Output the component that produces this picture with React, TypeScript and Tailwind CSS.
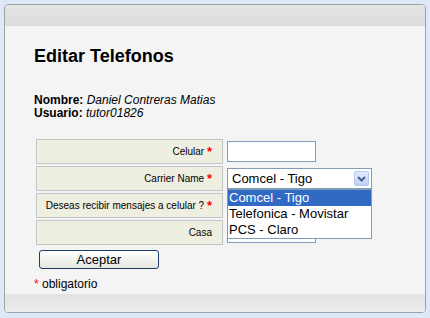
const carriers = ["Comcel - Tigo", "Telefonica - Movistar", "PCS - Claro"];

function Star() {
  return <span className="text-[13px] font-bold text-[#ff0000]">*</span>;
}

function LabelCell({ children }: { children: React.ReactNode }) {
  return (
    <div className="flex h-[25px] w-[187px] items-center justify-end whitespace-nowrap border border-[#bfc6c6] bg-[#eeefe0] pr-[10px] text-[10px] text-black">
      {children}
    </div>
  );
}

export default function App() {
  return (
    <div className="h-[318px] w-[430px] bg-[#dfe8f6] p-[4px] font-['Liberation_Sans',Arial,sans-serif]">
      <div className="flex h-[309px] w-[422px] flex-col overflow-hidden rounded-[4px] border border-[#9aa3ab] bg-[#f4f4f4]">
        <div className="h-[21px] bg-gradient-to-b from-[#e4e4e4] to-[#dcdcdc]" />
        <div className="relative flex-1 pl-[29px]">
          <h1 className="mt-[20px] text-[18px] font-bold leading-[20px] text-black">Editar Telefonos</h1>
          <div className="mt-[28px] text-[12px] leading-[13px] text-black">
            <p>
              <b>Nombre:</b> <i>Daniel Contreras Matias</i>
            </p>
            <p>
              <b>Usuario:</b> <i>tutor01826</i>
            </p>
          </div>

          <div className="mt-[19px] ml-[2px] flex flex-col gap-[2px]">
            <div className="flex items-center gap-[4px]">
              <LabelCell>
                Celular&nbsp;<Star />
              </LabelCell>
              <div className="h-[21px] w-[89px] border border-[#7f9db9] bg-white" />
            </div>
            <div className="flex items-center gap-[4px]">
              <LabelCell>
                Carrier Name&nbsp;<Star />
              </LabelCell>
              <div className="relative flex h-[21px] w-[145px] items-center border border-[#7f9db9] bg-white pl-[4px] text-[13px] text-black">
                Comcel - Tigo
                <div className="absolute right-[2px] top-[2px] flex h-[15px] w-[15px] items-center justify-center rounded-[2px] border border-[#b5c8f0] bg-gradient-to-b from-[#e3ecfd] to-[#bcd0f7]">
                  <svg width="9" height="6" viewBox="0 0 9 6">
                    <path d="M1 1 L4.5 4.5 L8 1" fill="none" stroke="#4d6185" strokeWidth="2" />
                  </svg>
                </div>
              </div>
            </div>
            <div className="flex items-center gap-[4px]">
              <LabelCell>
                Deseas recibir mensajes a celular ?&nbsp;<Star />
              </LabelCell>
            </div>
            <div className="flex items-center gap-[4px]">
              <LabelCell>Casa</LabelCell>
              <div className="h-[21px] w-[89px] border border-[#7f9db9] bg-white" />
            </div>
          </div>

          <div className="absolute left-[222px] top-[163px] w-[145px] border border-[#7f9db9] bg-white text-[13px] leading-[16px] text-black">
            {carriers.map((c, i) => (
              <div key={c} className={i === 0 ? "bg-[#316ac5] pl-[1px] text-white" : "pl-[1px]"}>
                {c}
              </div>
            ))}
          </div>

          <button className="mt-[5px] ml-[5px] h-[19px] w-[120px] rounded-[3px] border border-[#1c3c6a] bg-gradient-to-b from-[#ffffff] to-[#e6e6df] text-[13px] leading-[16px] text-black">
            Aceptar
          </button>
          <p className="mt-[6px] text-[12px] leading-[14px] text-black">
            <span className="text-[#ff0000]">*</span> obligatorio
          </p>
        </div>
        <div className="h-[18px] bg-gradient-to-b from-[#e2e2e2] to-[#ececec]" />
      </div>
    </div>
  );
}
